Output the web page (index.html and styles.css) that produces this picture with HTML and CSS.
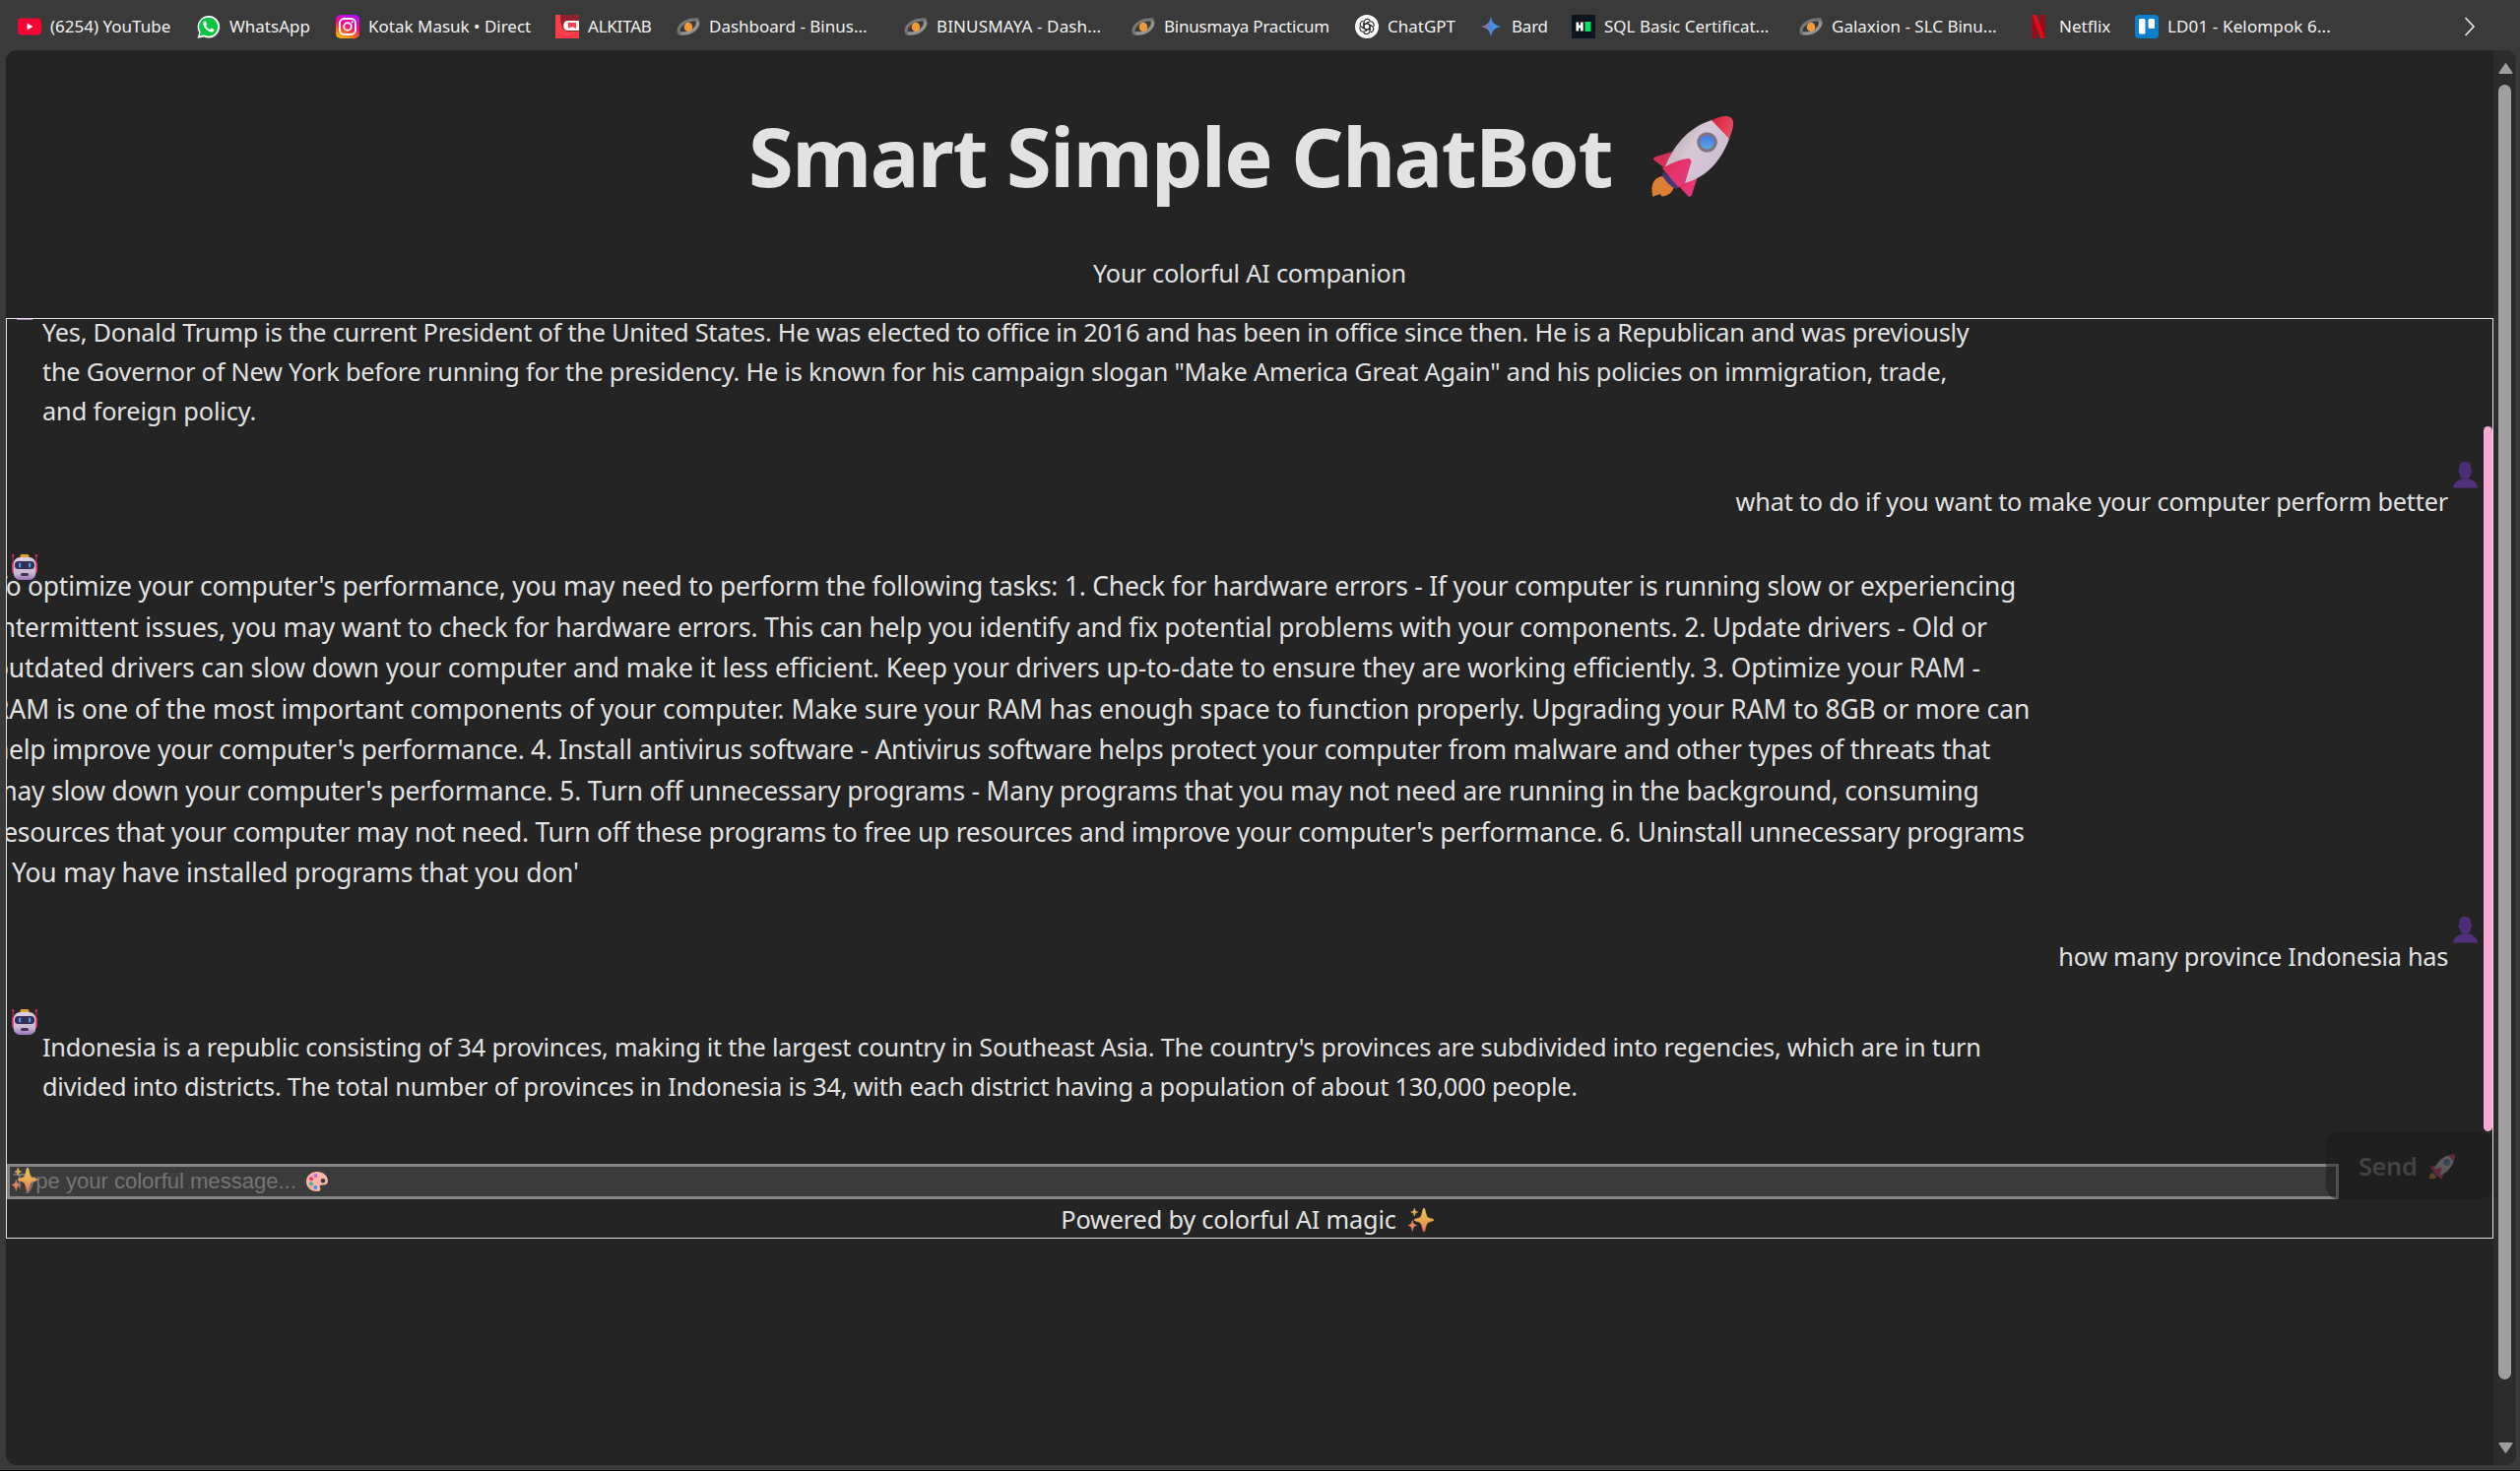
FILE: index.html
```html
<!DOCTYPE html>
<html lang="en">
<head>
<meta charset="utf-8">
<title>Smart Simple ChatBot</title>
<link rel="stylesheet" href="styles.css">
</head>
<body>
<svg class="defs" aria-hidden="true">
  <defs>
    <linearGradient id="gold" x1="0" y1="0" x2="0" y2="1"><stop offset="0" stop-color="#e6c85a"/><stop offset=".5" stop-color="#eaa850"/><stop offset="1" stop-color="#e2705e"/></linearGradient>
    <linearGradient id="hull" x1="0" y1="0" x2="1" y2=".6"><stop offset="0" stop-color="#a89ca0"/><stop offset=".5" stop-color="#d8c8d6"/><stop offset="1" stop-color="#cdbcd4"/></linearGradient>
    <linearGradient id="fin" x1="0" y1="0" x2="1" y2="1"><stop offset="0" stop-color="#d82c55"/><stop offset=".5" stop-color="#e8356e"/><stop offset="1" stop-color="#d83a88"/></linearGradient>
    <linearGradient id="nose" x1="0" y1="0" x2="1" y2=".3"><stop offset="0" stop-color="#d81f38"/><stop offset="1" stop-color="#e84a60"/></linearGradient>
    <linearGradient id="glass" x1="0" y1="0" x2="0" y2="1"><stop offset="0" stop-color="#3f78ee"/><stop offset="1" stop-color="#58aae2"/></linearGradient>
    <linearGradient id="face" x1="0" y1="0" x2="0" y2="1"><stop offset="0" stop-color="#dccfe0"/><stop offset=".7" stop-color="#c8b6d2"/><stop offset="1" stop-color="#9a70c0"/></linearGradient>
    <linearGradient id="insta" x1="0.2" y1="1" x2=".6" y2="0"><stop offset="0" stop-color="#ffc800"/><stop offset=".3" stop-color="#ff5a20"/><stop offset=".6" stop-color="#ff0090"/><stop offset="1" stop-color="#b010ff"/></linearGradient>
    <linearGradient id="bard" x1="0" y1="0" x2="1" y2="0"><stop offset="0" stop-color="#c2648c"/><stop offset=".5" stop-color="#4a88dc"/><stop offset="1" stop-color="#2aa6e6"/></linearGradient>
    <symbol id="rocket" viewBox="0 0 83 82">
      <path d="M11 61C3 62-1 69 1 80c0 2 1 2 2 1l6-2 1 2c1 1 2 0 3 0 6-1 10-6 10-11z" fill="#dd7f32"/>
      <path d="M12 56l17 16-4 2c-6-3-11-8-14-14z" fill="#42397a"/>
      <path d="M21 36L5 41c-3 1-4 3-2 4l11 8z" fill="#d43058"/>
      <path d="M47 61l-6 19c-1 2-3 2-4 1L27 70l7-4z" fill="url(#fin)"/>
      <path d="M14 51C22 31 36 12 61 4c9 4 14 10 18 19C71 44 58 61 34 68z" fill="url(#hull)"/>
      <path d="M61 4C70 0 76-1 80 1c6 4 2 14-1 22z" fill="url(#nose)"/>
      <path d="M11 53c8-5 18-9 26-10 3 0 4 2 3 5l-6 20-7 4z" fill="url(#fin)"/>
      <circle cx="56.500" cy="26.500" r="10.300" fill="#7c7484"/><circle cx="56.500" cy="26.500" r="7" fill="url(#glass)"/>
    </symbol>
    <symbol id="sparkles" viewBox="0 0 26 24">
      <path d="M16 0c1.200 0 1.600 7 3.500 9.200C21 10.700 26 11 26 12s-5 1.600-6.500 3C17.600 17 17.200 24 16 24s-1.600-7-3.500-9C11 13.500 6 13 6 12s5-1.300 6.500-2.800C14.400 7 14.800 0 16 0z" fill="url(#gold)" stroke="url(#gold)" stroke-width=".8"/>
      <path d="M6.300 0c.7 2.600 1 3.200 3.500 4-2.500.8-2.800 1.400-3.500 4-.7-2.600-1-3.200-3.500-4 2.500-.8 2.800-1.400 3.500-4z" fill="#dfa755" stroke="#dfa755" stroke-width=".6"/>
      <path d="M4.300 12.500c.8 3.200 1.200 4 4.300 5-3.100 1-3.500 1.800-4.300 5.800C3.500 19.300 3.100 18.500 0 17.500c3.100-1 3.500-1.800 4.300-5z" fill="#e5835e" stroke="#e5835e" stroke-width=".6"/>
    </symbol>
    <symbol id="robot" viewBox="0 0 26 26">
      <path d="M1.200 1v17M24.800 1v17" stroke="#d42a5a" stroke-width="1"/><circle cx="1.200" cy="1.200" r="1.200" fill="#e02a54"/><circle cx="24.800" cy="1.200" r="1.200" fill="#e02a54"/>
      <rect x="0" y="8" width="4" height="11" rx="2" fill="#d7305f"/><rect x="22" y="8" width="4" height="11" rx="2" fill="#d7305f"/>
      <rect x="8.500" y="0" width="9" height="5" rx="1.500" fill="#dda32c"/>
      <rect x="1.700" y="3" width="22.600" height="23" rx="6.500" fill="url(#face)"/>
      <rect x="3" y="7" width="20" height="8" rx="3.500" fill="#392c58"/>
      <rect x="7" y="8.500" width="2.200" height="5" rx="1" fill="#3aa3e2"/><rect x="17" y="8.500" width="2.200" height="5" rx="1" fill="#3aa3e2"/>
      <rect x="9" y="19" width="8" height="3" rx="1.500" fill="#43305c"/>
    </symbol>
    <symbol id="person" viewBox="0 0 25 27">
      <path d="M0 26.500c0-4 4.500-8.500 9.500-9h6c5 .5 9.500 5 9.500 9z" fill="#51317e"/>
      <path d="M6.500 5C6.500 1.500 9 0 12.300 0s5.900 1.500 5.900 5v3c1.500-.3 1.700 3.200 0 3.500 0 3-2.700 6.500-5.900 6.500s-5.800-3.500-5.800-6.500C4.800 11.200 5 7.700 6.500 8z" fill="#4b2d78"/>
    </symbol>
    <symbol id="galaxy" viewBox="0 0 24 24">
      <path d="M2.500 19C0 12 9 4 20.500 5" fill="none" stroke="#777" stroke-width="3"/>
      <path d="M21 5c3 7-5 15-17.500 14" fill="none" stroke="#939393" stroke-width="3.500"/>
      <path d="M18 3h4l1 5zM1 16v4l5 1z" fill="#6c6c6c"/>
      <ellipse cx="12" cy="12.500" rx="4.200" ry="4.700" fill="#f29a38"/>
    </symbol>
  </defs>
</svg>

<nav class="bookmarks">
  <a class="mark"><svg viewBox="0 0 24 24"><rect y="3.500" width="24" height="17" rx="4" fill="#ff0033"/><path d="M9.500 8.500v7l6-3.500z" fill="#fff"/></svg><span>(6254) YouTube</span></a>
  <a class="mark"><svg viewBox="0 0 24 24"><path d="M.5 24l1.700-6A11.300 11.300 0 1 1 7 22.400z" fill="#fff"/><path d="M2.600 21.500l1.100-4A9.500 9.500 0 1 1 7 20.500z" fill="#08c441"/><path d="M8 6.500c-1 .2-2 1.600-1.600 3.200 1 4 4 6.800 7.600 7.800 1.800.4 3.500-.8 3.500-2.600l-2.800-1.400-1.400 1.500c-2-.8-3.300-2-4.100-4l1.100-1.300-1.200-3z" fill="#fff"/></svg><span>WhatsApp</span></a>
  <a class="mark"><svg viewBox="0 0 24 24"><rect width="24" height="24" rx="5" fill="url(#insta)"/><rect x="4" y="4" width="16" height="16" rx="4.500" fill="none" stroke="#fff" stroke-width="1.900"/><circle cx="12" cy="12" r="3.800" fill="none" stroke="#fff" stroke-width="1.900"/><circle cx="16.600" cy="7.400" r="1.100" fill="#fff"/></svg><span>Kotak Masuk • Direct</span></a>
  <a class="mark snug"><svg viewBox="0 0 24 24"><path d="M0 0h24v24H0z" fill="#ff3d4b"/><path d="M5 0h19v17H13c-5 0-8-5-8-17z" fill="#8f242d"/><path d="M12 6h12v10H12c-5 0-5-10 0-10z" fill="#fff"/><path d="M13 8h8v6l-4-2-4 2z" fill="#ff3d4b"/></svg><span>ALKITAB</span></a>
  <a class="mark"><svg><use href="#galaxy"/></svg><span>Dashboard - Binus...</span></a>
  <a class="mark loose"><svg><use href="#galaxy"/></svg><span>BINUSMAYA - Dash...</span></a>
  <a class="mark snug"><svg><use href="#galaxy"/></svg><span>Binusmaya Practicum</span></a>
  <a class="mark"><svg viewBox="0 0 24 24"><circle cx="12" cy="12" r="12" fill="#fff"/><g fill="none" stroke="#222" stroke-width="1.100"><path id="petal" d="M9 14V7.600a3.400 3.400 0 0 1 6.300-1.500M9 10.200l5-2.900"/><use href="#petal" transform="rotate(60 12 12)"/><use href="#petal" transform="rotate(120 12 12)"/><use href="#petal" transform="rotate(180 12 12)"/><use href="#petal" transform="rotate(240 12 12)"/><use href="#petal" transform="rotate(300 12 12)"/></g></svg><span>ChatGPT</span></a>
  <a class="mark snug"><svg viewBox="0 0 24 24"><path d="M12 1.500C13.500 8.500 15.500 10.500 22.500 12c-7 1.500-9 3.500-10.500 10.500C10.500 15.500 8.500 13.500 1.500 12c7-1.500 9-3.500 10.500-10.500z" fill="url(#bard)"/></svg><span>Bard</span></a>
  <a class="mark"><svg viewBox="0 0 24 24"><path d="M0 0h24v24H0z" fill="#0d141e"/><path d="M4.500 7.500h2.700v3H9v-3h2.700v9H9v-3H7.200v3H4.500z" fill="#fff"/><path d="M13.500 7h6v10h-6z" fill="#05e660"/></svg><span>SQL Basic Certificat...</span></a>
  <a class="mark"><svg><use href="#galaxy"/></svg><span>Galaxion - SLC Binu...</span></a>
  <a class="mark"><svg viewBox="0 0 24 24"><path d="M5.500 0H10v24H5.500zM14 0h4.500v24H14z" fill="#a50712"/><path d="M5.500 0H10l8.500 24H14z" fill="#e50914"/></svg><span>Netflix</span></a>
  <a class="mark loose"><svg viewBox="0 0 24 24"><rect width="24" height="24" rx="4" fill="#0b7fcb"/><rect x="4" y="4" width="6.500" height="15.500" rx="1.500" fill="#fff"/><rect x="13.500" y="4" width="6.500" height="10" rx="1.500" fill="#fff"/></svg><span>LD01 - Kelompok 6...</span></a>
  <svg class="more" viewBox="0 0 12 20"><path d="M1.500 1l8.500 9-8.500 9" fill="none" stroke="#e8e8e8" stroke-width="1.700"/></svg>
</nav>

<div class="viewport">
  <main class="page">
    <h1 class="title"><span>Smart Simple ChatBot</span><svg><use href="#rocket"/></svg></h1>
    <p class="subtitle"><span>Your colorful AI companion</span></p>
    <section class="chatbox">
      <div class="history">
        <div class="messages">
          <i class="peek"></i>
          <p class="bot first"><span>Yes, Donald Trump is the current President of the United States. He was elected to office in 2016 and has been in office since then. He is a Republican and was previously</span><br><span>the Governor of New York before running for the presidency. He is known for his campaign slogan "Make America Great Again" and his policies on immigration, trade,</span><br><span>and foreign policy.</span></p>
          <div class="user"><p><span>what to do if you want to make your computer perform better</span></p><svg><use href="#person"/></svg></div>
          <svg class="robot"><use href="#robot"/></svg>
          <p class="bot grown"><span>To optimize your computer's performance, you may need to perform the following tasks: 1. Check for hardware errors - If your computer is running slow or experiencing</span><br><span>intermittent issues, you may want to check for hardware errors. This can help you identify and fix potential problems with your components. 2. Update drivers - Old or</span><br><span>outdated drivers can slow down your computer and make it less efficient. Keep your drivers up-to-date to ensure they are working efficiently. 3. Optimize your RAM -</span><br><span>RAM is one of the most important components of your computer. Make sure your RAM has enough space to function properly. Upgrading your RAM to 8GB or more can</span><br><span>help improve your computer's performance. 4. Install antivirus software - Antivirus software helps protect your computer from malware and other types of threats that</span><br><span>may slow down your computer's performance. 5. Turn off unnecessary programs - Many programs that you may not need are running in the background, consuming</span><br><span>resources that your computer may not need. Turn off these programs to free up resources and improve your computer's performance. 6. Uninstall unnecessary programs</span><br><span>- You may have installed programs that you don'</span></p>
          <div class="user second"><p><span>how many province Indonesia has</span></p><svg><use href="#person"/></svg></div>
          <svg class="robot"><use href="#robot"/></svg>
          <p class="bot last"><span>Indonesia is a republic consisting of 34 provinces, making it the largest country in Southeast Asia. The country's provinces are subdivided into regencies, which are in turn</span><br><span>divided into districts. The total number of provinces in Indonesia is 34, with each district having a population of about 130,000 people.</span></p>
        </div>
        <div class="track"><div class="thumb"></div></div>
      </div>
      <form class="composer">
        <div class="field"><span>Type your colorful message...</span><svg class="palette" viewBox="0 0 22 20"><path d="M11 0C4.500 0 0 4.500 0 10s4 10 11 10c3.500 0 4-2 3-4-1-1.800 0-2.500 3-2.500 3.500 0 5-1.500 5-4C22 4 17 0 11 0zm6 7a2.300 2.300 0 1 1 0 4.600 2.300 2.300 0 0 1 0-4.600z" fill="#fbb5a4"/><circle cx="9.500" cy="4" r="2" fill="#b968e8"/><circle cx="5" cy="7.300" r="2" fill="#f0307c"/><circle cx="5" cy="12.300" r="2" fill="#3bb3a8"/><circle cx="9.300" cy="16" r="2" fill="#3a92f0"/></svg><svg class="spark"><use href="#sparkles"/></svg></div>
        <div class="send"><span>Send</span><svg><use href="#rocket"/></svg></div>
      </form>
      <p class="powered"><span>Powered by colorful AI magic</span><svg><use href="#sparkles"/></svg></p>
    </section>
  </main>
  <aside class="scrollbar">
    <svg viewBox="0 0 15 11"><path d="M7.500 1.200L13.500 10h-12z" fill="#9d9d9d" stroke="#9d9d9d" stroke-width="2" stroke-linejoin="round"/></svg>
    <div class="handle"></div>
    <svg class="down" viewBox="0 0 15 11"><path d="M7.500 9.800L13.500 1h-12z" fill="#9d9d9d" stroke="#9d9d9d" stroke-width="2" stroke-linejoin="round"/></svg>
  </aside>
</div>
</body>
</html>
```
FILE: styles.css
```css
* { box-sizing: border-box; }
body {
  margin: 0;
  width: 2559px;
  height: 1494px;
  overflow: hidden;
  background: #3a3a3a;
  border-bottom: 1px solid #000;
  color: #e2e2e2;
  font-family: "Noto Sans", "Open Sans", sans-serif;
  font-size: 25.3px;
}
svg { display: block; flex: none; }
p, h1 { margin: 0; font-weight: 400; white-space: nowrap; }
.defs { position: absolute; width: 0; height: 0; }

.bookmarks {
  display: grid;
  grid-template-columns: 182px 141px 223px 123px 231px 231px 227px 126px 94px 231px 231px 110px 1fr 12px;
  height: 51px;
  padding: 15px 45px 0 18px;
  font-size: 17px;
  line-height: 24px;
  color: #f2f2f2;
}
.mark { display: flex; gap: 9px; white-space: nowrap; }
.mark svg { width: 24px; height: 24px; }
.snug { letter-spacing: -.23px; }
.loose { letter-spacing: .13px; }
.more { width: 12px; height: 20px; margin-top: 2px; }

.viewport {
  display: flex;
  width: 2549px;
  height: 1437px;
  margin-left: 6px;
  border-radius: 11px;
  overflow: hidden;
  background: #242424;
}
.page { width: 2526px; }
.title {
  display: flex;
  height: 117px;
  margin-top: 51px;
  padding-left: 754px;
  font-size: 83px;
  font-weight: 700;
  letter-spacing: -1.5px;
  line-height: 111px;
}
.title svg { width: 83px; height: 82px; margin: 16px 0 0 40px; }
.subtitle { margin-top: 38px; line-height: 40px; text-align: center; letter-spacing: -.21px; }

.chatbox { margin-top: 26px; height: 935px; border: 1px solid #e2e2e2; }
.history { display: flex; height: 825px; overflow: hidden; }
.messages { flex: 1; overflow: hidden; }
.peek { display: block; width: 16px; height: 1px; margin-left: 10px; background: #a484c4; }
.bot { line-height: 40px; padding-left: 36px; }
.first { margin-top: -8px; letter-spacing: -.235px; }
.first span:nth-of-type(2) { letter-spacing: -.215px; }
.first span:nth-of-type(3) { letter-spacing: -.1px; }
.user { display: flex; justify-content: flex-end; height: 60px; margin-top: 32px; padding-right: 6px; line-height: 40px; letter-spacing: -.215px; }
.user p { padding-top: 20px; }
.user svg { width: 25px; height: 27px; margin-left: 5px; }
.robot { width: 26px; height: 26px; margin: 34px 0 0 5px; }
.grown { font-size: 26.4px; line-height: 41.6px; margin: -14px 0 0 -14px; padding-left: 0; letter-spacing: -.2px; }
.grown span:nth-of-type(2) { letter-spacing: -.18px; }
.grown span:nth-of-type(3) { letter-spacing: -.095px; }
.grown span:nth-of-type(4) { letter-spacing: -.05px; }
.grown span:nth-of-type(5) { letter-spacing: -.22px; }
.grown span:nth-of-type(6) { letter-spacing: -.19px; }
.grown span:nth-of-type(7) { letter-spacing: -.243px; }
.grown span:nth-of-type(8) { letter-spacing: -.15px; padding-left: 4px; }
.second { margin-top: 23px; letter-spacing: -.285px; }
.last { margin-top: -8px; letter-spacing: -.246px; }
.last span:nth-of-type(2) { letter-spacing: -.2px; }
.track { width: 9px; }
.thumb { height: 716px; margin-top: 109px; border-radius: 5px; background: #f9a8d4; }

.composer { display: flex; align-items: flex-end; height: 69px; margin: 0; }
.field {
  position: relative;
  display: flex;
  width: 2368px;
  height: 36px;
  padding-left: 3px;
  border: 3px solid #858585;
  background: #3b3b3b;
  color: #757575;
  font: 22.2px/30px "Liberation Sans", sans-serif;
  letter-spacing: -.07px;
}
.palette { width: 22px; height: 20px; margin: 5px 0 0 10px; }
.spark { position: absolute; left: 2px; top: 1px; width: 26px; height: 24px; }
.send {
  position: relative;
  display: flex;
  width: 169px;
  height: 69px;
  margin-left: -13px;
  padding-left: 33px;
  border-radius: 13px;
  background: rgba(26, 26, 26, .5);
  color: #434343;
  font-weight: 600;
  letter-spacing: -.3px;
  line-height: 71px;
}
.send svg { width: 26px; height: 26px; margin: 23px 0 0 12px; opacity: .35; }
.powered { display: flex; justify-content: center; padding-right: 5px; line-height: 40px; letter-spacing: -.19px; }
.powered svg { width: 26px; height: 24px; margin: 9px 0 0 12px; }

.scrollbar { width: 23px; height: 1437px; background: #2c2c2c; padding-top: 13px; }
.scrollbar svg { width: 15px; height: 11px; margin-left: 5px; }
.handle { width: 13px; height: 1315px; margin: 11px 0 64px 5px; border-radius: 7px; background: #9f9f9f; }
```
